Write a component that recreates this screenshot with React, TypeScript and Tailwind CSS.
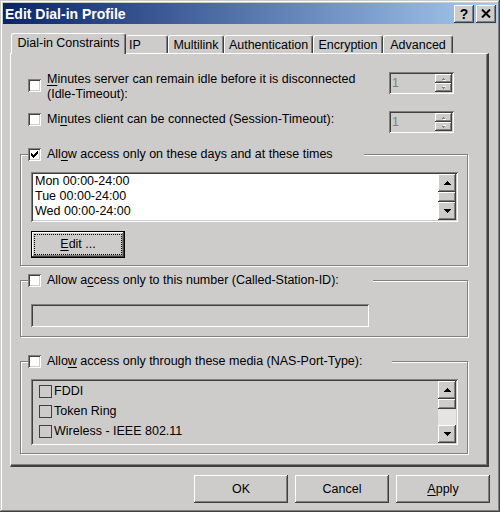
import React from 'react';

const raised =
  'bg-[#cdcccb] shadow-[inset_-1px_-1px_#404040,inset_1px_1px_#fff,inset_-2px_-2px_#808080]';
const sunken =
  'shadow-[inset_1px_1px_#808080,inset_-1px_-1px_#fff,inset_2px_2px_#404040,inset_-2px_-2px_#cdcccb]';

function U({ children }: { children: React.ReactNode }) {
  return <span className="underline underline-offset-[2px]">{children}</span>;
}

function Check({ checked }: { checked?: boolean }) {
  return (
    <span className={`flex h-[13px] w-[13px] shrink-0 items-center justify-center bg-white ${sunken}`}>
      {checked && (
        <svg width="7" height="7" viewBox="0 0 7 7" shapeRendering="crispEdges">
          <path
            d="M0 2h1v3h-1zM1 3h1v3h-1zM2 4h1v3h-1zM3 3h1v3h-1zM4 2h1v3h-1zM5 1h1v3h-1zM6 0h1v3h-1z"
            fill="#000"
          />
        </svg>
      )}
    </span>
  );
}

function Arrow({ down, disabled }: { down?: boolean; disabled?: boolean }) {
  if (disabled) {
    return (
      <svg width="6" height="4" viewBox="0 0 6 4" shapeRendering="crispEdges">
        <g transform={down ? 'translate(0 4) scale(1 -1)' : undefined}>
          <path d="M2 1h1v1h-1zM1 2h3v1h-3z" fill="#fff" transform="translate(1 1)" />
          <path d="M2 1h1v1h-1zM1 2h3v1h-3z" fill="#808080" />
        </g>
      </svg>
    );
  }
  return (
    <svg width="7" height="4" viewBox="0 0 7 4" shapeRendering="crispEdges">
      <g transform={down ? 'translate(0 4) scale(1 -1)' : undefined}>
        <path d="M3 0h1v1h-1zM2 1h3v1h-3zM1 2h5v1h-5zM0 3h7v1h-7z" fill="#000" />
      </g>
    </svg>
  );
}

function ScrollBar({ track }: { track?: boolean }) {
  return (
    <div className="flex w-[18px] shrink-0 flex-col">
      <div className={`flex h-[18px] items-center justify-center ${raised}`}>
        <Arrow />
      </div>
      <div className={`h-[10px] ${raised}`} />
      <div className={track ? 'flex-1 bg-[#e4e4e2]' : 'flex-1'} />
      <div className={`flex h-[18px] items-center justify-center ${raised}`}>
        <Arrow down />
      </div>
    </div>
  );
}

function Spin() {
  return (
    <div className={`flex h-[22px] w-[65px] shrink-0 bg-[#cdcccb] p-[2px] ${sunken}`}>
      <span className="flex-1 pl-[1px] leading-[18px] text-[#808080]">1</span>
      <div className="flex w-[17px] flex-col">
        <div className={`flex flex-1 items-center justify-center ${raised}`}>
          <Arrow disabled />
        </div>
        <div className={`flex flex-1 items-center justify-center ${raised}`}>
          <Arrow down disabled />
        </div>
      </div>
    </div>
  );
}

function Group({
  label,
  checked,
  legend,
  className,
  children,
}: {
  label: React.ReactNode;
  checked?: boolean;
  legend: string;
  className: string;
  children: React.ReactNode;
}) {
  return (
    <div
      className={`ml-[9px] mr-[19px] border border-[#808080] shadow-[1px_1px_0_#fff,inset_1px_1px_0_#fff] ${className}`}
    >
      <div className={`-mt-[8px] ml-[7px] flex h-[15px] items-center bg-[#cdcccb] ${legend}`}>
        <Check checked={checked} />
        <span className="ml-[6px] whitespace-nowrap">{label}</span>
      </div>
      {children}
    </div>
  );
}

function Tab({
  label,
  active,
  className,
}: {
  label: string;
  active?: boolean;
  className: string;
}) {
  const base =
    'flex shrink-0 justify-center rounded-t-[3px] border-l border-t border-r border-white border-r-[#404040] bg-[#cdcccb] pt-[2px] leading-[15px] shadow-[inset_-1px_0_#808080]';
  return (
    <div className={`${base} ${active ? 'relative z-10 -mb-[1px] h-[21px]' : 'h-[18px]'} ${className}`}>
      {label}
    </div>
  );
}

function Button({ children }: { children: React.ReactNode }) {
  return (
    <div className={`flex h-[28px] w-[94px] items-center justify-center ${raised}`}>{children}</div>
  );
}

export default function App() {
  return (
    <div className="h-[512px] w-[500px] overflow-hidden bg-[#cdcccb] p-[3px] font-['Liberation_Sans',Arial,sans-serif] text-[12.5px] leading-[15px] text-black shadow-[inset_-1px_-1px_#404040,inset_1px_1px_#cdcccb,inset_-2px_-2px_#808080,inset_2px_2px_#fff]">
      {/* title bar */}
      <div className="flex h-[21px] items-center bg-[linear-gradient(to_right,#0a246a,#a6caf0)] pl-[2px] pr-[1px]">
        <span className="flex-1 pt-[1px] text-[14px] font-bold leading-[20px] text-white">
          Edit Dial-in Profile
        </span>
        <div className={`flex h-[18px] w-[20px] items-center justify-center text-[14px] font-bold leading-none ${raised}`}>
          ?
        </div>
        <div className={`ml-[2px] flex h-[18px] w-[20px] items-center justify-center ${raised}`}>
          <svg width="10" height="9" viewBox="0 0 10 9">
            <path d="M1 0.5L9 8.5M9 0.5L1 8.5" stroke="#000" strokeWidth="2" />
          </svg>
        </div>
      </div>

      {/* tabs */}
      <div className="ml-[8px] mt-[9px] flex h-[20px] items-end">
        <Tab label="Dial-in Constraints" active className="w-[115px]" />
        <Tab label="IP" className="w-[42px] !justify-start border-l-0 pl-[3px]" />
        <Tab label="Multilink" className="w-[56px]" />
        <Tab label="Authentication" className="w-[89px]" />
        <Tab label="Encryption" className="w-[70px]" />
        <Tab label="Advanced" className="w-[70px]" />
      </div>

      {/* tab panel */}
      <div className="ml-[7px] flex h-[414px] w-[479px] flex-col border-l border-t border-r-2 border-b-2 border-white border-r-[#404040] border-b-[#404040] shadow-[inset_-1px_-1px_#808080]">
        {/* idle timeout */}
        <div className="mt-[18px] flex">
          <div className="ml-[17px] mt-[7px]">
            <Check />
          </div>
          <div className="ml-[6px] flex-1">
            <U>M</U>inutes server can remain idle before it is disconnected
            <br />
            (Idle-Timeout):
          </div>
          <div className="mr-[33px]">
            <Spin />
          </div>
        </div>

        {/* session timeout */}
        <div className="mt-[9px] flex">
          <div className="ml-[17px] mt-[2px]">
            <Check />
          </div>
          <div className="ml-[6px] mt-[1px] flex-1">
            Mi<U>n</U>utes client can be connected (Session-Timeout):
          </div>
          <div className="mr-[33px]">
            <Spin />
          </div>
        </div>

        {/* days and times */}
        <Group
          checked
          legend="w-[336px]"
          className="mt-[21px] pb-[7px]"
          label={
            <>
              All<U>o</U>w access only on these days and at these times
            </>
          }
        >
          <div className={`ml-[10px] mr-[9px] mt-[10px] flex h-[50px] bg-white p-[2px] ${sunken}`}>
            <div className="flex-1 pl-[2px]">
              <div>Mon 00:00-24:00</div>
              <div>Tue 00:00-24:00</div>
              <div>Wed 00:00-24:00</div>
            </div>
            <ScrollBar />
          </div>
          <div className="ml-[10px] mt-[9px] h-[27px] w-[94px] border border-black">
            <div className={`flex h-full w-full p-[2px] ${raised}`}>
              <div className="flex flex-1 items-center justify-center border border-dotted border-black">
                <U>E</U>dit ...
              </div>
            </div>
          </div>
        </Group>

        {/* called station */}
        <Group
          legend="w-[345px]"
          className="mt-[14px] pb-[9px]"
          label={
            <>
              Allow a<U>c</U>cess only to this number (Called-Station-ID):
            </>
          }
        >
          <div className={`ml-[10px] mt-[16px] h-[23px] w-[338px] bg-[#cdcccb] ${sunken}`} />
        </Group>

        {/* media */}
        <Group
          legend="w-[364px]"
          className="mt-[24px] pb-[8px]"
          label={
            <>
              Allo<U>w</U> access only through these media (NAS-Port-Type):
            </>
          }
        >
          <div className={`ml-[10px] mr-[9px] mt-[10px] flex h-[66px] bg-[#cdcccb] p-[2px] ${sunken}`}>
            <div className="flex-1 pl-[6px]">
              {['FDDI', 'Token Ring', 'Wireless - IEEE 802.11'].map((m) => (
                <div key={m} className="flex h-[20px] items-center">
                  <span className="h-[13px] w-[13px] shrink-0 border border-[#404040]" />
                  <span className="ml-[2px]">{m}</span>
                </div>
              ))}
            </div>
            <ScrollBar track />
          </div>
        </Group>
      </div>

      {/* dialog buttons */}
      <div className="mr-[7px] mt-[8px] flex justify-end gap-[7px]">
        <Button>OK</Button>
        <Button>Cancel</Button>
        <Button>
          <span>
            <U>A</U>pply
          </span>
        </Button>
      </div>
    </div>
  );
}
